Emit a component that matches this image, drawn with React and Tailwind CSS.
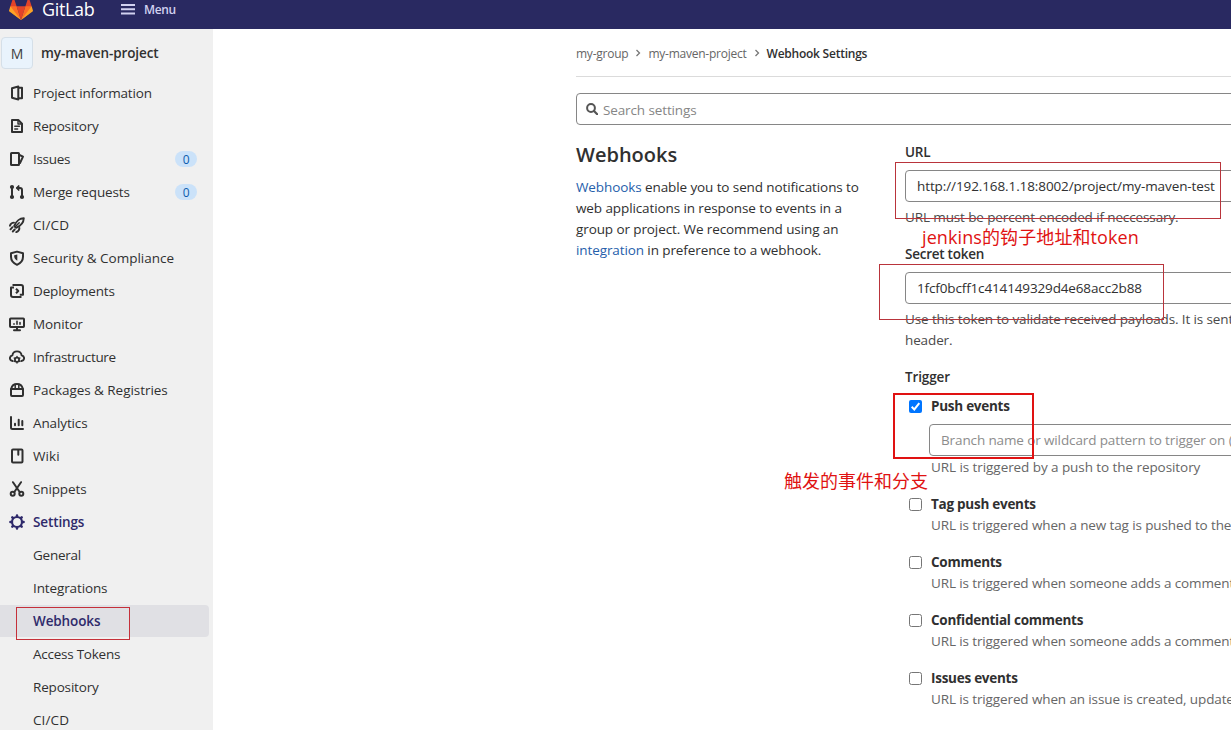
const stroke = {
  fill: "none",
  stroke: "currentColor",
  strokeWidth: 2,
  strokeLinejoin: "round",
  strokeLinecap: "round",
};

const icons = {
  project: (
    <g {...stroke}>
      <path d="M9.3 1.500 3 3.200v9.600l6.300 1.700z" />
      <path d="M10 2.800h3v10.400h-3" />
    </g>
  ),
  repository: (
    <g {...stroke}>
      <path d="M3 2h6.300L13 5.700V14H3z" />
      <path d="M9 2.300V6h3.700" strokeWidth="1.400" />
      <path d="M5.800 8.300h4.600M5.800 11.100h2.800" strokeWidth="1.500" />
    </g>
  ),
  issues: (
    <g {...stroke}>
      <rect x="2" y="2" width="8" height="12" rx="0.6" />
      <path d="M10.500 4 14 5.600 11 12" />
    </g>
  ),
  merge: (
    <g {...stroke}>
      <path d="M3 3.500v9" strokeWidth="2" />
      <circle cx="3" cy="3" r="1.100" />
      <circle cx="3" cy="13" r="1.100" />
      <path d="M8.500 4H11c1.300 0 2 .8 2 2v6.500" strokeWidth="2" />
      <path d="M9.800 1.700 7.500 4l2.300 2.300z" fill="currentColor" strokeWidth="1.200" />
      <circle cx="13" cy="13" r="1.100" />
    </g>
  ),
  rocket: (
    <g {...stroke} strokeWidth="1.900">
      <path d="M14.800 1.200c-4.300.1-6.800 1.700-9.600 7.800l1.900 1.900c5.200-2.300 7.500-5.200 7.700-9.700z" />
      <path d="M6.200 9.800l4-4" strokeWidth="1.500" />
      <path d="M5 5.600C2.800 5.600 1.600 6.600.9 8.700M10.400 11c0 2.200-1 3.400-3.100 4.100M3.500 10.200l-2 2.100M5.700 12.500l-1.900 2" />
    </g>
  ),
  shield: (
    <g {...stroke}>
      <path d="M8 1.600 14 3.200v3.600c0 3.800-2.300 6.400-6 8-3.700-1.600-6-4.200-6-8V3.200z" strokeWidth="2" />
      <path d="M8.300 4.500v6.200C6.200 9.500 5.200 8 5.200 6.200v-1z" fill="currentColor" stroke="none" />
    </g>
  ),
  deploy: (
    <g {...stroke} strokeLinecap="butt">
      <path d="M3.500 2H12c1.300 0 2 .7 2 2v7.700h-3.200" />
      <path d="M5 4.500H2V12c0 1.300.7 2 2 2h8.500" />
      <path d="m7 5.700 2.300 2.300L7 10.300" />
    </g>
  ),
  monitor: (
    <g {...stroke}>
      <rect x="1" y="2.500" width="14" height="8.500" rx="0.7" />
      <path d="M8 11v3M5 14.200h6" />
      <path d="M5 8.300v-.6M8 8.300V5.200M11 8.300V6.500" strokeWidth="1.600" />
    </g>
  ),
  infrastructure: (
    <g {...stroke}>
      <path
        d="M3.600 12C1.900 11.700.9 10.600.9 9.200c0-1.500 1-2.500 2.500-2.800C3.700 4 5.500 2.400 8 2.400S12.300 4 12.600 6.400c1.500.3 2.500 1.300 2.500 2.800 0 1.400-1 2.500-2.700 2.800"
        strokeWidth="1.900"
      />
      <circle cx="8" cy="10.700" r="2.100" strokeWidth="1.800" />
      <path
        d="M8 7.500v.4M8 13.500v.6M5.200 9l.5.300M10.400 12.100l.5.300M5.200 12.400l.5-.3M10.400 9.300l.5-.3"
        strokeWidth="1.400"
      />
    </g>
  ),
  packages: (
    <g {...stroke}>
      <path d="M2 7h12v6c0 .6-.4 1-1 1H3c-.6 0-1-.4-1-1z" />
      <path d="M2.300 6.500C3 3.500 5 2 8 2s5 1.500 5.700 4.500" />
      <path d="M6.200 2.500v3.800M9.800 2.500v3.800" strokeWidth="1.500" />
    </g>
  ),
  analytics: (
    <g {...stroke}>
      <path d="M2 2v10.500c0 .9.600 1.500 1.500 1.500H14" />
      <path d="M6 10.300V8.800M9.700 10.300V4.700M13.300 10.300V6" />
    </g>
  ),
  wiki: (
    <g {...stroke}>
      <rect x="3" y="1.500" width="10.500" height="13" rx="1" />
      <path d="M9.300 2v4.800" />
    </g>
  ),
  snippets: (
    <g {...stroke}>
      <path d="M4 1.200l6.500 9.600M12 1.200 5.500 10.800" />
      <circle cx="3.700" cy="12.700" r="2" />
      <circle cx="12.300" cy="12.700" r="2" />
    </g>
  ),
  settings: (
    <g {...stroke}>
      <circle cx="8" cy="8" r="5" strokeWidth="2.200" />
      <path
        d="M8 1.400v1M8 13.600v1M1.400 8h1M13.600 8h1M3.300 3.300l.7.700M12 12l.7.700M3.300 12.700l.7-.7M12 4l.7-.7"
        strokeWidth="2.500"
      />
    </g>
  ),
};

function Icon({ name }) {
  return (
    <svg viewBox="0 0 16 16" className="h-4 w-4 shrink-0">
      {icons[name]}
    </svg>
  );
}

const nav = [
  { icon: "project", label: "Project information", tracking: "tracking-[-0.17px]" },
  { icon: "repository", label: "Repository", tracking: "tracking-[-0.17px]" },
  { icon: "issues", label: "Issues", count: "0", tracking: "tracking-[-0.3px]" },
  { icon: "merge", label: "Merge requests", count: "0" },
  { icon: "rocket", label: "CI/CD", tracking: "tracking-[0.1px]" },
  { icon: "shield", label: "Security & Compliance", tracking: "tracking-normal" },
  { icon: "deploy", label: "Deployments", tracking: "tracking-[-0.17px]" },
  { icon: "monitor", label: "Monitor" },
  { icon: "infrastructure", label: "Infrastructure", tracking: "tracking-[-0.32px]" },
  { icon: "packages", label: "Packages & Registries", tracking: "tracking-[-0.05px]" },
  { icon: "analytics", label: "Analytics" },
  { icon: "wiki", label: "Wiki", tracking: "tracking-[0.1px]" },
  { icon: "snippets", label: "Snippets" },
];

const subNav = [
  { label: "General", tracking: "tracking-[-0.25px]" },
  { label: "Integrations" },
  { label: "Webhooks", active: true },
  { label: "Access Tokens", tracking: "tracking-[-0.25px]" },
  { label: "Repository", tracking: "tracking-[-0.17px]" },
  { label: "CI/CD", tracking: "tracking-[0.1px]" },
];

const events = [
  ["Tag push events", "URL is triggered when a new tag is pushed to the repository"],
  ["Comments", "URL is triggered when someone adds a comment"],
  ["Confidential comments", "URL is triggered when someone adds a comment on a confidential issue"],
  ["Issues events", "URL is triggered when an issue is created, updated, closed, or reopened"],
];

function Header() {
  return (
    <header className="flex h-[29px] shrink-0 items-start overflow-hidden bg-[#292961]">
      <svg viewBox="0 0 36 36" className="-mt-[3px] ml-[9px] h-6 w-6 shrink-0">
        <path fill="#e24329" d="M2 14l9.380 9v-9l-4-12.280c-.205-.632-1.176-.632-1.380 0z" />
        <path fill="#e24329" d="M34 14l-9.380 9v-9l4-12.280c.205-.632 1.176-.632 1.380 0z" />
        <path fill="#e24329" d="M18 34.380L11.380 14h13.240z" />
        <path fill="#fc6d26" d="M18 34.380L11.380 14H2l4 11z" />
        <path fill="#fc6d26" d="M18 34.380L24.620 14H34l-4 11z" />
        <path fill="#fca326" d="M2 14L.1 20.160c-.18.565 0 1.200.5 1.560L18 34.380z" />
        <path fill="#fca326" d="M34 14l1.900 6.160c.18.565 0 1.200-.5 1.560L18 34.380z" />
      </svg>
      <span className="-mt-[3px] ml-[9px] w-[52px] whitespace-nowrap text-[18px] leading-[25px] tracking-[-0.35px] text-white">
        GitLab
      </span>
      <svg viewBox="0 0 14 12" className="ml-[27px] mt-[3px] h-3 w-[14px] shrink-0">
        <path d="M0 2h14M0 6.250h14M0 10.500h14" stroke="#d1d1f0" strokeWidth="1.900" />
      </svg>
      <span className="ml-[9px] text-[12px] font-semibold leading-[20px] tracking-[-0.4px] text-[#d1d1f0]">Menu</span>
    </header>
  );
}

function Sidebar() {
  return (
    <aside className="w-[213px] shrink-0 overflow-hidden bg-[#f0f0f0] pt-2">
      <div className="mb-2 flex items-center">
        <div className="ml-px flex h-8 w-8 items-center justify-center rounded-[4px] border border-[#d5dfe8] bg-[#e9f3fc] text-[14px] text-[#404040]">
          M
        </div>
        <span className="ml-2 pt-px font-semibold tracking-[-0.1px]">my-maven-project</span>
      </div>
      <nav className="flex flex-col gap-px">
        {nav.map(({ icon, label, count, tracking = "tracking-[-0.12px]" }) => (
          <div key={label} className="flex h-8 items-center gap-2 pl-[9px] pr-4">
            <Icon name={icon} />
            <span className={`grow whitespace-nowrap ${tracking}`}>{label}</span>
            {count && (
              <span className="flex h-4 w-[22px] items-center justify-center rounded-full bg-[#cbe2f9] text-[12px] text-[#0b5cad]">
                {count}
              </span>
            )}
          </div>
        ))}
        <div className="flex h-8 items-center gap-2 pl-[9px] font-semibold text-[#2f2a6b]">
          <Icon name="settings" />
          <span className="pt-px">Settings</span>
        </div>
        {subNav.map(({ label, active, tracking = "tracking-[-0.12px]" }) => (
          <div
            key={label}
            className={`flex h-8 items-center pl-[33px] ${tracking} ${
              active ? "mr-1 rounded-r-[4px] bg-[#e0e0e4] pt-px font-semibold text-[#2f2a6b]" : ""
            }`}
          >
            {label}
          </div>
        ))}
      </nav>
    </aside>
  );
}

function Chevron() {
  return (
    <svg viewBox="0 0 8 8" className="mx-[6px] -mt-[2px] h-2 w-2 shrink-0">
      <path d="M2.500 1l3 3-3 3" fill="none" stroke="#777" strokeWidth="1.300" />
    </svg>
  );
}

function Field({ children }) {
  return (
    <div className="flex h-8 items-center whitespace-nowrap rounded-[4px] border border-[#868686] bg-white pl-[11px]">
      {children}
    </div>
  );
}

function Checkbox({ checked }) {
  return checked ? (
    <svg viewBox="0 0 13 13" className="h-[13px] w-[13px] shrink-0">
      <rect width="13" height="13" rx="2" fill="#0075ff" />
      <path d="M2.700 6.800l2.600 2.600 5-6.200" fill="none" stroke="#fff" strokeWidth="2" />
    </svg>
  ) : (
    <span className="h-[13px] w-[13px] shrink-0 rounded-[2.500px] border border-[#767676] bg-white" />
  );
}

function EventHead({ label, checked }) {
  return (
    <div className="flex h-[21px] items-center gap-[9px] pl-1">
      <Checkbox checked={checked} />
      <span className="font-bold tracking-[-0.26px]">{label}</span>
    </div>
  );
}

function WebhookForm() {
  return (
    <section className="w-[660px] shrink-0 whitespace-nowrap pt-px">
      <div className="mb-[7px] font-semibold tracking-[-0.25px]">URL</div>
      <Field>
        <span className="tracking-[-0.1px]">http://192.168.1.18:8002/project/my-maven-test</span>
      </Field>
      <div className="mt-[5px] text-[#4a4a4a]">URL must be percent-encoded if neccessary.</div>
      <div className="mb-[7px] mt-4 font-semibold tracking-[-0.25px]">Secret token</div>
      <Field>
        <span className="tracking-[-0.14px]">1fcf0bcff1c414149329d4e68acc2b88</span>
      </Field>
      <div className="mt-[5px] text-[#4a4a4a]">
        Use this token to validate received payloads. It is sent with the request
        <br />
        header.
      </div>
      <div className="mt-4 font-semibold">Trigger</div>
      <div className="mt-2">
        <EventHead label="Push events" checked />
        <div className="ml-6 mt-[7px]">
          <Field>
            <span className="text-[#8c8c8c]">Branch name or wildcard pattern to trigger on (leave blank for all)</span>
          </Field>
        </div>
        <div className="ml-[26px] mt-px tracking-[-0.07px] text-[#666]">URL is triggered by a push to the repository</div>
      </div>
      {events.map(([label, text]) => (
        <div key={label} className="mt-4">
          <EventHead label={label} />
          <div className="ml-[26px] text-[#666]">{text}</div>
        </div>
      ))}
    </section>
  );
}

function Main() {
  return (
    <main className="min-w-0 grow overflow-hidden bg-white pl-[363px]">
      <div className="flex h-12 w-[990px] items-center border-b border-[#dbdbdb] pt-[2px] text-[12px] tracking-[-0.24px] text-[#666]">
        <span>my-group</span>
        <Chevron />
        <span>my-maven-project</span>
        <Chevron />
        <span className="font-semibold text-[#303030]">Webhook Settings</span>
      </div>
      <div className="mt-4 flex h-8 w-[990px] items-center rounded-[4px] border border-[#868686] pl-[9px] text-[#868686]">
        <svg viewBox="0 0 12 12" className="mr-[5px] h-3 w-3">
          <circle cx="5" cy="5" r="3.900" fill="none" stroke="#555" strokeWidth="2" />
          <path d="M8 8l3.200 3.200" stroke="#555" strokeWidth="2.200" strokeLinecap="round" />
        </svg>
        <span className="pt-[2px]">Search settings</span>
      </div>
      <div className="mt-4 flex">
        <section className="w-[329px] shrink-0 whitespace-nowrap">
          <h4 className="mb-[9px] text-[20px] font-semibold leading-[27px] tracking-normal">Webhooks</h4>
          <p className="tracking-[-0.1px]">
            <a className="text-[#2660ab]">Webhooks</a> enable you to send notifications to
            <br />
            web applications in response to events in a
            <br />
            group or project. We recommend using an
            <br />
            <a className="text-[#2660ab]">integration</a> in preference to a webhook.
          </p>
        </section>
        <WebhookForm />
      </div>
    </main>
  );
}

function Note({ className, children }) {
  return (
    <div
      className={`absolute whitespace-nowrap font-['Open_Sans','Noto_Sans_CJK_SC',sans-serif] text-[18px] font-normal leading-6 text-[#e01212] ${className}`}
    >
      {children}
    </div>
  );
}

export default function App() {
  return (
    <div className="relative flex h-[730px] w-[1231px] flex-col overflow-hidden bg-white font-['Open_Sans',sans-serif] text-[13.5px] leading-[21px] tracking-[-0.12px] text-[#303030]">
      <Header />
      <div className="flex min-h-0 grow">
        <Sidebar />
        <Main />
      </div>
      <div className="absolute left-[16px] top-[607px] h-[33px] w-[114px] border border-[#c5303a]" />
      <div className="absolute left-[895px] top-[162px] h-[57px] w-[326px] border border-[#b9343b]" />
      <div className="absolute left-[879px] top-[264px] h-[56px] w-[285px] border border-[#b9343b]" />
      <div className="absolute left-[893px] top-[393px] h-[66px] w-[141px] border-2 border-[#e01212]" />
      <Note className="left-[922px] top-[225px] tracking-[0.1px]">jenkins的钩子地址和token</Note>
      <Note className="left-[784px] top-[469px] tracking-normal">触发的事件和分支</Note>
    </div>
  );
}
